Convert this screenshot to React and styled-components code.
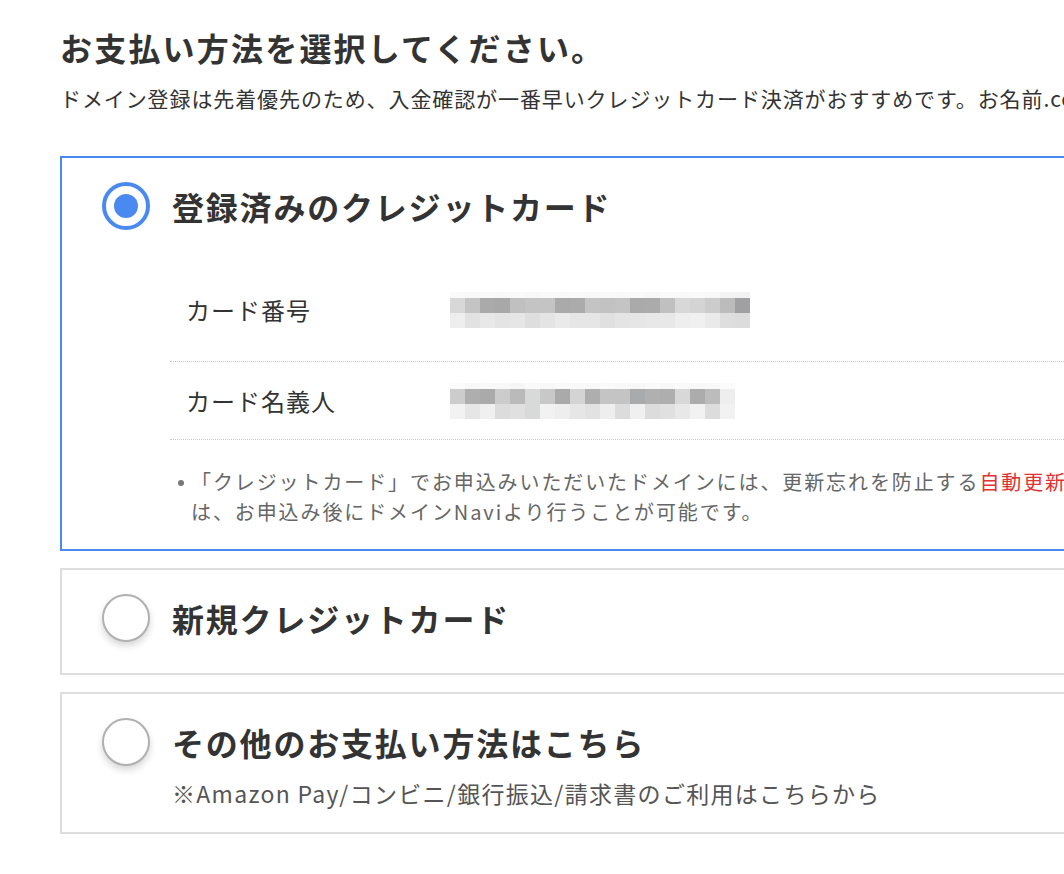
import React from 'react'
import styled, { createGlobalStyle } from 'styled-components'

const GlobalStyle = createGlobalStyle`
    html, body {
        margin: 0;
        padding: 0;
        background: #fff;
        overflow: hidden;
    }
    body {
        font-family: "Noto Sans CJK JP", "Noto Sans", sans-serif;
        color: #333;
    }
`

// pixelated (blurred) card info
const numberRows = [
    { h: 6, c: ['fafafa', 'f8f8f8', 'fafafa', 'f9f9f9', 'fafafa', 'f8f8f8', 'fafafa', 'f9f9f9', 'fafafa', 'f8f8f8', 'fafafa', 'f9f9f9', 'fafafa', 'f8f8f8', 'fafafa', 'f9f9f9', 'fafafa', 'f8f8f8', 'f4f4f4', 'f2f2f2'] },
    { h: 15, c: ['d8d8d8', 'c4c4c4', 'aaaaaa', 'a8a8a8', 'c0c0c0', 'c4c4c4', 'c4c4c4', 'aaaaaa', 'ababab', 'c4c4c4', 'c2c2c2', 'c4c4c4', 'aaaaaa', 'ababab', 'c0c0c0', 'd8d8d8', 'd4d4d4', 'cccccc', 'bcbcbc', 'a0a0a2'] },
    { h: 15, c: ['eeeeee', 'e2e2e2', 'e8e8e8', 'e4e4e4', 'e6e6e6', 'dedede', 'e4e4e4', 'eaeaea', 'e6e6e6', 'e6e6e6', 'e0e0e0', 'e4e4e4', 'e6e6e6', 'e8e8e8', 'e8e8e8', 'eeeeee', 'f0f0f0', 'eaeaea', 'dedede', 'dcdcdc'] },
]

const holderRows = [
    { h: 6, c: ['fbfbfb', 'f8f8f8', 'fafafa', 'f8f8f8', 'f6f6f6', 'fafafa', 'f8f8f8', 'fafafa', 'f9f9f9', 'f8f8f8', 'fafafa', 'f8f8f8', 'f7f7f7', 'fafafa', 'f8f8f8', 'fafafa', 'f8f8f8', 'f9f9f9', 'fbfbfb'] },
    { h: 15, c: ['cccccc', 'aeaeae', 'aaaaaa', 'cccccc', 'bababa', 'd8dada', 'c8c8c8', 'aaaaaa', 'd4d4d4', 'aeaeae', 'c4c4c4', 'c4c4c4', 'a8aaac', 'b0b0b0', 'aeaeae', 'd8d8d8', 'acacac', 'bcbcbc', 'eeeeee'] },
    { h: 15, c: ['f2f2f2', 'e6e6e6', 'f0f0f0', 'dcdcdc', 'e0e0e0', 'd8dada', 'f2f2f2', 'eeeeee', 'e6e6e6', 'e2e2e2', 'eeeeee', 'dcdcdc', 'f0f0f0', 'dcdcdc', 'e0e0e0', 'e8e8e8', 'f2f2f2', 'dcdcdc', 'f2f2f2'] },
]

function Mosaic({ rows, cell = 15 }) {
    const width = rows[0].c.length * cell
    const height = rows.reduce((s, r) => s + r.h, 0)
    let y = 0
    return (
        <svg width={width} height={height} viewBox={`0 0 ${width} ${height}`} style={{ display: 'block' }}>
            {rows.map((row, ri) => {
                const top = y
                y += row.h
                return row.c.map((col, ci) => (
                    <rect key={`${ri}-${ci}`} x={ci * cell} y={top} width={cell} height={row.h} fill={`#${col}`} />
                ))
            })}
        </svg>
    )
}

function App() {
    return (
        <Page>
            <GlobalStyle />
            <Heading>お支払い方法を選択してください。</Heading>
            <Lead>
                ドメイン登録は先着優先のため、入金確認が一番早いクレジットカード決済がおすすめです。お名前.comではその他のお支払い方法もご利用いただけます。
            </Lead>

            <Card $active $pb={22}>
                <Header>
                    <Radio $checked />
                    <CardTitle>登録済みのクレジットカード</CardTitle>
                </Header>
                <Details>
                    <Row $pb={33}>
                        <Label>カード番号</Label>
                        <Mosaic rows={numberRows} />
                    </Row>
                    <Row>
                        <Label>カード名義人</Label>
                        <Mosaic rows={holderRows} />
                    </Row>
                </Details>
                <Notes>
                    <Note>
                        「クレジットカード」でお申込みいただいたドメインには、更新忘れを防止する<Red>自動更新設定</Red>が適用されます。設定の変更
                        <br />
                        は、お申込み後にドメインNaviより行うことが可能です。
                    </Note>
                </Notes>
            </Card>

            <Card $pb={31}>
                <Header>
                    <Radio />
                    <CardTitle>新規クレジットカード</CardTitle>
                </Header>
            </Card>

            <Card $pb={23}>
                <Header>
                    <Radio />
                    <CardTitle>その他のお支払い方法はこちら</CardTitle>
                </Header>
                <SubText>※Amazon Pay/コンビニ/銀行振込/請求書のご利用はこちらから</SubText>
            </Card>
        </Page>
    )
}

export default App

const Page = styled.div `
    width: 1160px;
    padding: 27px 0 40px 60px;
`

const Heading = styled.h1 `
    margin: 0;
    font-size: 32px;
    line-height: 40px;
    font-weight: 700;
    letter-spacing: 2.2px;
    color: #333;
`

const Lead = styled.p `
    margin: 16px 0 0;
    font-size: 21px;
    line-height: 30px;
    letter-spacing: 0.9px;
    white-space: nowrap;
    color: #333;
`

const Card = styled.div `
    margin-top: ${p => (p.$active ? '43px' : '17px')};
    border: 2px solid ${p => (p.$active ? '#4a89f0' : '#dddddd')};
    padding: 24px 0 ${p => p.$pb}px 40px;
    background: #fff;
`

const Header = styled.div `
    display: flex;
    align-items: center;
    gap: 22px;
    height: 48px;
`

const Radio = styled.span `
    flex: none;
    box-sizing: border-box;
    width: 48px;
    height: 48px;
    border-radius: 50%;
    background: #fff;
    border: ${p => (p.$checked ? '4px solid #4a89f0' : '2px solid #b0b0b0')};
    box-shadow: ${p => (p.$checked ? 'none' : '0 4px 7px rgba(0, 0, 0, 0.16)')};
    display: flex;
    align-items: center;
    justify-content: center;

    &::after {
        content: '';
        display: ${p => (p.$checked ? 'block' : 'none')};
        width: 24px;
        height: 24px;
        border-radius: 50%;
        background: #4a89f0;
    }
`

const CardTitle = styled.h2 `
    margin: 0;
    font-size: 32px;
    line-height: 48px;
    font-weight: 700;
    letter-spacing: 1.8px;
    color: #333;
`

const Details = styled.div `
    margin: 41px 0 0 68px;
`

const Row = styled.div `
    display: flex;
    align-items: center;
    padding: 21px 0 ${p => p.$pb || 20}px 16px;
    border-bottom: 1px dotted #c8c8c8;
`

const Label = styled.div `
    width: 264px;
    font-size: 24px;
    line-height: 26px;
    letter-spacing: 1px;
    color: #333;
`

const Notes = styled.ul `
    list-style: none;
    margin: 27px 0 0 68px;
    padding: 0;
`

const Note = styled.li `
    position: relative;
    padding-left: 21px;
    font-size: 20px;
    line-height: 30px;
    letter-spacing: 1.9px;
    color: #666;
    white-space: nowrap;

    &::before {
        content: '';
        position: absolute;
        left: 8px;
        top: 13px;
        width: 6px;
        height: 6px;
        border-radius: 50%;
        background: #777;
    }
`

const Red = styled.span `
    color: #e03232;
`

const SubText = styled.p `
    margin: 11px 0 0 70px;
    font-size: 23px;
    line-height: 32px;
    letter-spacing: 1.3px;
    color: #555;
`
